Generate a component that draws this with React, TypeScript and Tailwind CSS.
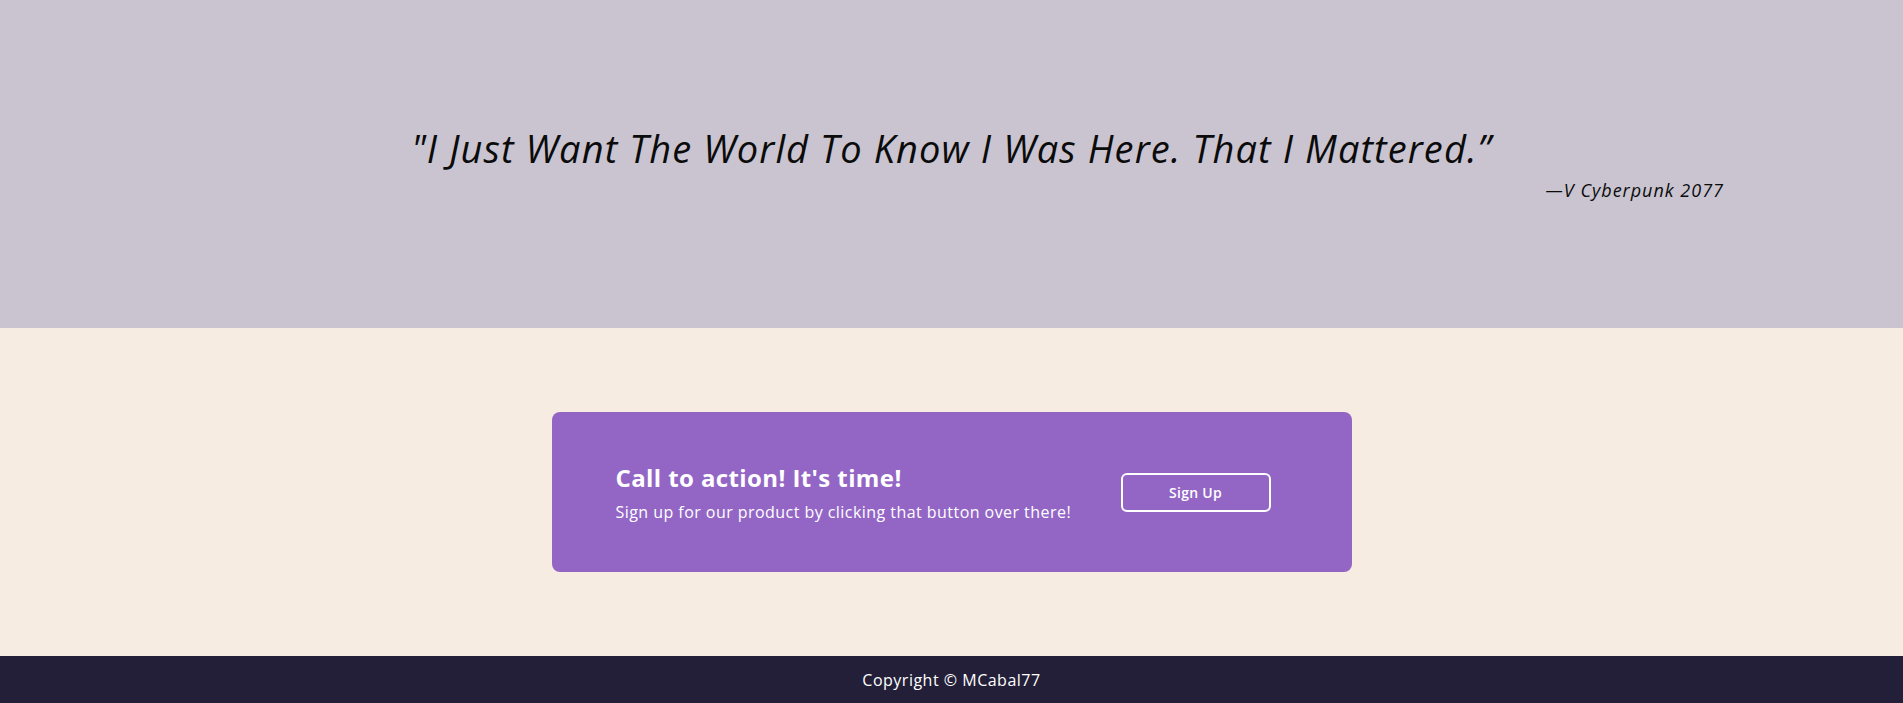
import React from "react";

const App = () => {
  return (
    <div className="min-h-screen w-full font-['Open_Sans',sans-serif]">
      <section className="flex h-[328px] flex-col justify-center bg-[#c9c4d0] px-[179px] pb-[5px] text-[#0b0b0b]">
        <blockquote className="text-center text-[38px] font-normal italic leading-[54px] tracking-[1.1px]">
          "I Just Want The World To Know I Was Here. That I Mattered.”
        </blockquote>
        <p className="mt-[2px] text-right text-[18px] italic leading-[26px] tracking-[1px]">
          —V <cite>Cyberpunk 2077</cite>
        </p>
      </section>

      <section className="flex h-[328px] items-center justify-center bg-[#f6ece1]">
        <div className="flex h-[160px] w-[800px] items-center rounded-lg bg-[#9366c6] px-16 text-white">
          <div className="w-[505px]">
            <h2 className="mb-[4px] text-[24px] font-bold leading-[36px] tracking-[0.4px]">
              Call to action! It's time!
            </h2>
            <p className="text-[16px] leading-[24px] tracking-[0.45px]">
              Sign up for our product by clicking that button over there!
            </p>
          </div>
          <button className="h-[39px] w-[150px] rounded-md border-2 border-white text-[14px] font-semibold tracking-[0.3px]">
            Sign Up
          </button>
        </div>
      </section>

      <footer className="flex h-[47px] items-center justify-center bg-[#231f38] text-[16px] font-medium tracking-[0.5px] text-white">
        Copyright © MCabal77
      </footer>
    </div>
  );
};

export default App;
